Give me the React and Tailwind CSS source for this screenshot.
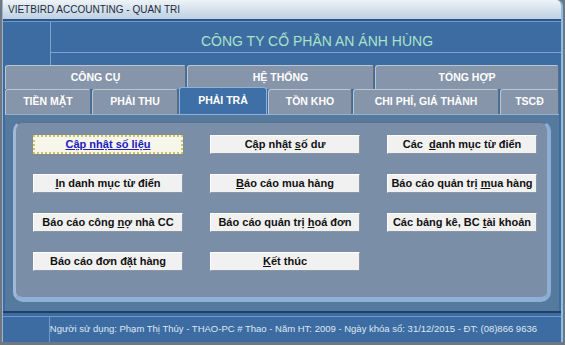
const row1 = ['CÔNG CỤ', 'HỆ THỐNG', 'TỔNG HỢP']

const row2 = [
    { label: 'TIỀN MẶT', w: 'w-[86px]' },
    { label: 'PHẢI THU', w: 'w-[86px]' },
    { label: 'PHẢI TRẢ', w: 'w-[88px]', active: true },
    { label: 'TỒN KHO', w: 'w-[84px]' },
    { label: 'CHI PHÍ, GIÁ THÀNH', w: 'w-[146px]' },
    { label: 'TSCĐ', w: 'flex-1' },
]

// text pieces: [before, underlined letter, after]
const buttons = [
    { parts: ['', 'Cập nhật số liệu', ''], focus: true },
    { parts: ['Cập nhật ', 's', 'ố dư'] },
    { parts: ['Các  ', 'd', 'anh mục từ điển'] },
    { parts: ['', 'I', 'n danh mục từ điển'] },
    { parts: ['', 'B', 'áo cáo mua hàng'] },
    { parts: ['Báo cáo quản trị ', 'm', 'ua hàng'] },
    { parts: ['Báo cáo công ', 'n', 'ợ nhà CC'] },
    { parts: ['Báo cáo quản trị ', 'h', 'oá đơn'] },
    { parts: ['Các bảng kê, BC ', 't', 'ài khoản'] },
    { parts: ['Báo cáo đơn đặt hàn', 'g', ''] },
    { parts: ['', 'K', 'ết thúc'] },
]

const TabBtn = ({ label, className }) => (
    <div
        className={`${className} h-full flex items-center justify-center rounded-t-[3px] border border-b-0 border-t-[#b9c6d4] border-l-[#b9c6d4] border-r-[#5f6d80] bg-[#8795aa] text-white font-bold text-[10.5px]`}
    >
        {label}
    </div>
)

const App = () => {
    return (
        <div className="w-[565px] h-[345px] bg-[#6f7882] overflow-hidden font-['Liberation_Sans',Arial,sans-serif]">
            <div className="ml-[2px] w-[561px] h-[342px] flex flex-col bg-[#3d6ca3] border-r-2 border-r-[#8fbde0] border-l border-l-[#9cb5cc] rounded-tr-[6px] overflow-hidden">
                {/* title bar */}
                <div className="h-[19px] shrink-0 flex items-center pl-[5px] bg-gradient-to-b from-[#eef3f8] to-[#bdd0e2] text-[10px] text-[#1c2a3a]">
                    VIETBIRD ACCOUNTING - QUAN TRI
                </div>

                {/* header band */}
                <div className="h-[46px] shrink-0 flex flex-col border-t-2 border-t-[#2a5788]">
                    <div className="h-px bg-[#6e9ac6]" />
                    <div className="flex-1 flex">
                        <div className="w-[48px] border-r border-r-[#7ba5cf]" />
                        <div className="flex-1 flex flex-col">
                            <div className="h-[30px] flex items-center justify-center pl-[22px] pt-[8px] text-[14px] text-[#a7e4c6]">
                                CÔNG TY CỔ PHẦN AN ÁNH HÙNG
                            </div>
                            <div className="h-px bg-[#7ba5cf]" />
                            <div className="flex-1" />
                        </div>
                    </div>
                </div>

                {/* tabs row 1 */}
                <div className="h-[24px] shrink-0 flex gap-px px-[2px]">
                    <TabBtn label={row1[0]} className="w-[181px]" />
                    <TabBtn label={row1[1]} className="w-[187px]" />
                    <TabBtn label={row1[2]} className="flex-1" />
                </div>

                {/* tabs row 2 */}
                <div className="h-[25px] shrink-0 flex gap-px px-[2px] items-end">
                    {row2.map((t) =>
                        t.active ? (
                            <div
                                key={t.label}
                                className={`${t.w} h-[27px] -mt-[2px] flex items-center justify-center rounded-t-[3px] border border-b-0 border-[#8fb2d6] bg-[#3f6fa7] text-white font-bold text-[10.5px]`}
                            >
                                {t.label}
                            </div>
                        ) : (
                            <TabBtn key={t.label} label={t.label} className={t.w} />
                        )
                    )}
                </div>

                {/* tab body */}
                <div className="h-[197px] shrink-0 mx-[2px] bg-[#56799e] px-[8px] pt-[6px] pb-[9px] flex border-t border-t-[#8fb2d6]">
                    <div className="flex-1 rounded-[10px] bg-[#7b8ea8] border-t-2 border-l-[3px] border-t-[#5d7595] border-l-[#9fbad8] border-b-[5px] border-r-[4px] border-b-[#8db0d6] border-r-[#8aaed4] pl-[17px] pt-[12px]">
                        <div className="grid grid-cols-[150px_150px_150px] gap-x-[27px] gap-y-[20px]">
                            {buttons.map((b, i) => (
                                <div
                                    key={i}
                                    className={`h-[19px] flex items-center justify-center whitespace-pre font-bold text-[11px] ${
                                        b.focus
                                            ? 'bg-[#f6f6ea] border-2 border-dotted border-[#c9c36a] text-[#2020c0] outline outline-1 outline-[#8a8a8a]'
                                            : 'bg-[#f1f1f1] border border-t-white border-l-white border-b-[#8b96a4] border-r-[#8b96a4] text-[#111]'
                                    }`}
                                >
                                    {b.parts[0]}
                                    <span className="underline">{b.parts[1]}</span>
                                    {b.parts[2]}
                                </div>
                            ))}
                        </div>
                    </div>
                </div>

                {/* status bar */}
                <div className="flex-1 flex flex-col border-t-2 border-t-[#1f3f66]">
                    <div className="h-[3px]" />
                    <div className="h-px bg-[#6f9bc6]" />
                    <div className="flex-1 flex">
                        <div className="w-[48px] border-r border-r-[#6f9bc6]" />
                        <div className="flex-1 flex items-center justify-center pr-[24px] text-[9.5px] text-[#dfe8f1] whitespace-nowrap">
                            Người sử dụng: Phạm Thị Thúy - THAO-PC # Thao - Năm HT: 2009 - Ngày khóa sổ: 31/12/2015 - ĐT: (08)866 9636
                        </div>
                    </div>
                </div>
            </div>
        </div>
    )
}

export default App
